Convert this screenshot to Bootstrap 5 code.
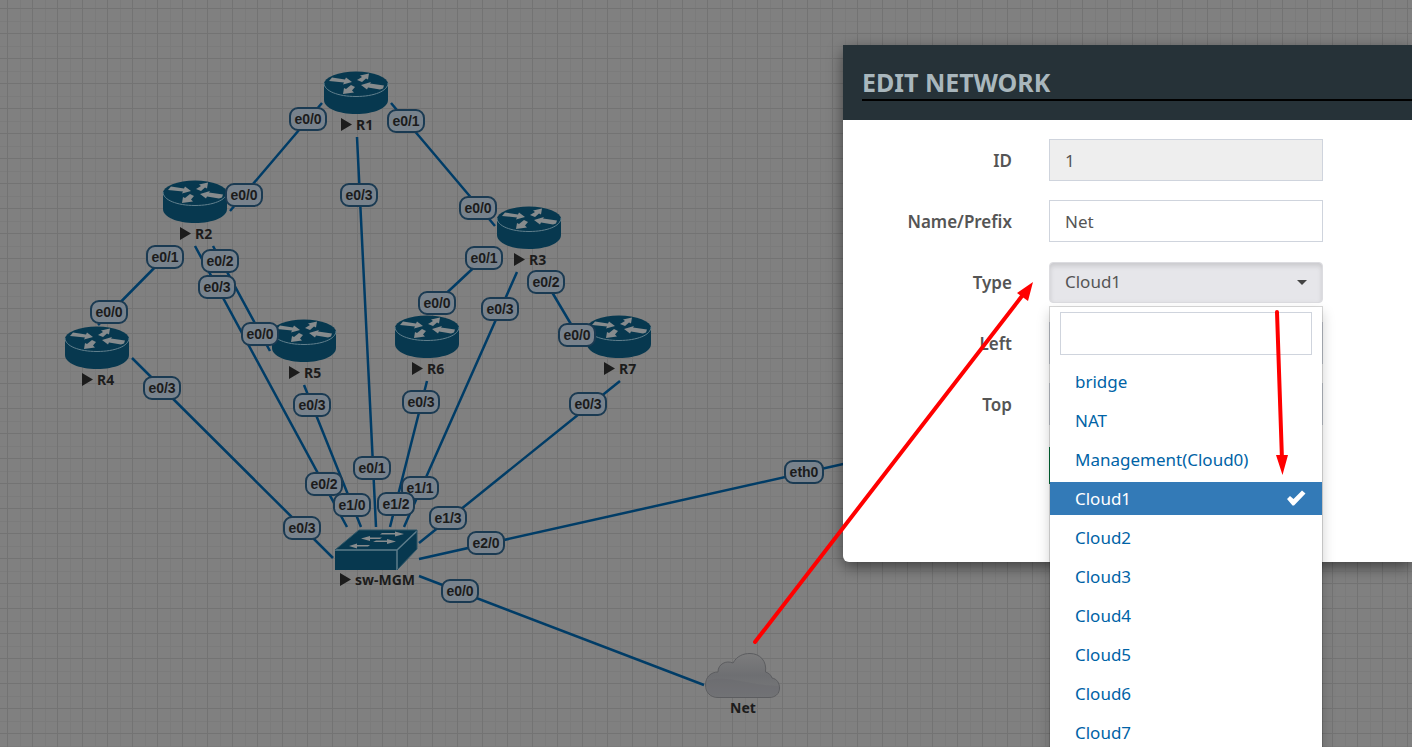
<!DOCTYPE html>
<html lang="en">
<head>
<meta charset="utf-8">
<meta name="viewport" content="width=device-width, initial-scale=1">
<title>Edit network</title>
<link href="https://cdn.jsdelivr.net/npm/bootstrap@5.3.0/dist/css/bootstrap.min.css" rel="stylesheet">
<style>
  body {
    font-family: "Noto Sans", "Open Sans", sans-serif;
    font-size: 17px;
    color: #555;
    background-color: #808080;
    background-image:
      linear-gradient(#737373 1px, transparent 1px),
      linear-gradient(90deg, #737373 1px, transparent 1px),
      linear-gradient(#7b7b7b 1px, transparent 1px),
      linear-gradient(90deg, #7b7b7b 1px, transparent 1px);
    background-size: 25px 25px;
    background-position: 0 8px, 7px 0, 0 21px, 20px 0;
  }
  .layer { position: absolute; inset: 0; width: 100%; height: 100%; }
  .wires { stroke: #003c66; stroke-width: 2.5; fill: none; }
  .port rect { fill: #78828c; stroke: #1a3a52; stroke-width: 2; }
  .port text { font: bold 14px "Liberation Sans", sans-serif; fill: #1c1c1c; text-anchor: middle; }
  .caption { font: bold 14px "Noto Sans", sans-serif; fill: #1c1c1c; }
  .marks { pointer-events: none; z-index: 2000; }
  .edit-panel {
    width: 40.3%;
    margin-top: 45px;
    border-radius: 6px 0 0 6px;
    box-shadow: 0 5px 15px rgba(0,0,0,.5);
    padding-bottom: 76px;
  }
  .edit-head { background: #263238; height: 75px; padding: 20px 0 0 19px; }
  .edit-head h1 {
    font-size: 25px; line-height: 34px; color: #a9b7bd;
    border-bottom: 2px solid #000; height: 36px;
  }
  .edit-form { padding-top: 19px; display: grid; row-gap: 19px; }
  .field-row { display: grid; grid-template-columns: 169px 48.2%; column-gap: 37px; height: 42px; align-items: center; }
  .field-row label { text-align: right; font-weight: 600; font-size: 17px; padding-top: 2px; }
  .edit-form .form-control {
    height: 42px; border-radius: 0; border-color: #cfd4dd; color: #555;
    padding: 0 15px; font-size: 17px;
  }
  .edit-form .form-control:disabled { background: #eee; }
  .type-btn {
    height: 41px; background: #e6e6ea; border: 1px solid #dcdce0; border-radius: 4px;
    box-shadow: inset 0 3px 5px rgba(0,0,0,.125); color: #555; font-size: 17px; padding: 0 15px;
  }
  .type-btn::after { border-top-width: 5px; border-left-width: 5px; border-right-width: 5px; color: #444; }
  .edit-form .type-menu {
    position: absolute; top: 44px; left: 0; right: 0; padding: 5px 0 3px; font-size: 17px;
    border-radius: 0; border: 1px solid rgba(0,0,0,.15);
    box-shadow: 0 6px 12px rgba(0,0,0,.175);
  }
  .type-menu .find { margin: 0 10px 10px; }
  .edit-form .find .form-control { height: 43px; }
  .type-menu .dropdown-item { color: #0063a6; height: 33px; line-height: 33px; padding: 0 16px 0 25px; margin-bottom: 6px; }
  .type-menu .dropdown-item.active { background: #337ab7; color: #fff; }
  .save-btn { width: 100px; height: 37px; border-radius: 0; background: #00733a; color: #fff; border: 0; }
</style>
</head>
<body class="vh-100 overflow-hidden position-relative">

<svg class="layer" role="img" aria-label="Network topology">
  <defs>
    <g id="router">
      <path d="M0 14V29C0 37 14 43 32 43S64 37 64 29V14Z" fill="#07384f"/>
      <ellipse cx="32" cy="13" rx="32" ry="12.500" fill="#07384f"/>
      <path d="M0 12C0 20 14 25.500 32 25.500S64 20 64 12" fill="none" stroke="#62808d" stroke-width="1"/>
      <path d="M5 10L8 6.500L21 8.500L22 6.500L28 11L19 13.500L20 11.500Z" fill="#868b8d"/>
      <path d="M59 17.500L60 14.500L46 12.500L47 11L37 14L43 18.500L44 16.500L56 18.500Z" fill="#868b8d"/>
      <path d="M33 9L38 6L36 4.500L45 2.500L44 8.500L42 7.500L38 11Z" fill="#868b8d"/>
      <path d="M31 16L27 14L22 18L20 17L19 23L30 21.500L28 19.500Z" fill="#868b8d"/>
    </g>
    <path id="play" d="M0 0L11 6.500L0 13Z" fill="#1c1c1c"/>
    <linearGradient id="cloudfill" x1="0" y1="0" x2="0" y2="1">
      <stop offset="0" stop-color="#7c7c7d"/><stop offset=".5" stop-color="#6e6f72"/><stop offset="1" stop-color="#78797b"/>
    </linearGradient>
  </defs>

  <g class="wires">
    <path d="M322 103L230 211M391 103L495 226M357 137L376 527M165 257L98 325M213 246L270 351M195 246L347 527M132 358L333 558M304 385L361 527M427 381L390 527M484 258L437 302M546 282L578 336M517 272L404 527M620 381L419 543M419 559L870 458M419 576L704 685"/>
  </g>

  <use href="#router" x="324" y="71"/><use href="#play" x="341" y="118"/><text class="caption" x="356" y="130">R1</text>
  <use href="#router" x="163" y="180"/><use href="#play" x="180" y="227"/><text class="caption" x="195" y="239">R2</text>
  <use href="#router" x="497" y="206"/><use href="#play" x="514" y="253"/><text class="caption" x="529" y="265">R3</text>
  <use href="#router" x="65" y="326"/><use href="#play" x="82" y="373"/><text class="caption" x="97" y="385">R4</text>
  <use href="#router" x="272" y="319"/><use href="#play" x="289" y="366"/><text class="caption" x="304" y="378">R5</text>
  <use href="#router" x="395" y="315"/><use href="#play" x="412" y="362"/><text class="caption" x="427" y="374">R6</text>
  <use href="#router" x="587" y="315"/><use href="#play" x="604" y="362"/><text class="caption" x="619" y="374">R7</text>

  <g>
    <path d="M335 550L359 530H417V549L397 570H335Z" fill="#07384f"/>
    <path d="M335 550H397L417 531M397 550V570" fill="none" stroke="#5d7c8a" stroke-width="1.500"/>
    <path d="M335 550L359 530H417V549L397 570" fill="none" stroke="#2c5466" stroke-width="1"/>
    <path d="M404 534L395 531.500V533H382L380 534.500H395V536.500ZM361 538.500L370 536V537.500H382L380 539H370V541ZM396 541.500L387 539V540.500H376L373 542H387V544ZM349 546L357 543.500V545H370L368 546.500H357V548.500Z" fill="#868b8d"/>
    <use href="#play" x="340" y="573"/><text class="caption" x="355" y="585">sw-MGM</text>
  </g>
  <g>
    <path d="M718 697.500C710 697.500 705.500 692 705.500 685C705.500 677 711 672 718 672C718 664 726 660 733 663C737 656 743 653.500 750 653.500C760 653.500 767 661 765.500 672C769 673 771 675 772 678C777 679 779.500 683 779.500 688C779.500 694 775 697.500 769 697.500Z" fill="url(#cloudfill)" stroke="#5c5d60"/>
    <path d="M706 681C728 674 748 686 779 686C780 693 775 697 769 697H718C710 697 705 691 706 681Z" fill="#66686c" opacity=".35"/>
    <text class="caption" x="730" y="713">Net</text>
  </g>

  <g class="port">
    <rect x="290" y="108" width="36" height="22" rx="8"/><text x="308" y="124">e0/0</text>
    <rect x="388" y="110" width="36" height="22" rx="8"/><text x="406" y="126">e0/1</text>
    <rect x="226" y="184" width="36" height="22" rx="8"/><text x="244" y="200">e0/0</text>
    <rect x="341" y="184" width="36" height="22" rx="8"/><text x="359" y="200">e0/3</text>
    <rect x="460" y="197" width="36" height="22" rx="8"/><text x="478" y="213">e0/0</text>
    <rect x="466" y="247" width="36" height="22" rx="8"/><text x="484" y="263">e0/1</text>
    <rect x="528" y="271" width="36" height="22" rx="8"/><text x="546" y="287">e0/2</text>
    <rect x="482" y="298" width="36" height="22" rx="8"/><text x="500" y="314">e0/3</text>
    <rect x="419" y="292" width="36" height="22" rx="8"/><text x="437" y="308">e0/0</text>
    <rect x="559" y="324" width="36" height="22" rx="8"/><text x="577" y="340">e0/0</text>
    <rect x="570" y="393" width="36" height="22" rx="8"/><text x="588" y="409">e0/3</text>
    <rect x="403" y="391" width="36" height="22" rx="8"/><text x="421" y="407">e0/3</text>
    <rect x="294" y="394" width="36" height="22" rx="8"/><text x="312" y="410">e0/3</text>
    <rect x="242" y="323" width="36" height="22" rx="8"/><text x="260" y="339">e0/0</text>
    <rect x="202" y="250" width="36" height="22" rx="8"/><text x="220" y="266">e0/2</text>
    <rect x="199" y="276" width="36" height="22" rx="8"/><text x="217" y="292">e0/3</text>
    <rect x="147" y="246" width="36" height="22" rx="8"/><text x="165" y="262">e0/1</text>
    <rect x="91" y="301" width="36" height="22" rx="8"/><text x="109" y="317">e0/0</text>
    <rect x="144" y="377" width="36" height="22" rx="8"/><text x="162" y="393">e0/3</text>
    <rect x="284" y="517" width="36" height="22" rx="8"/><text x="302" y="533">e0/3</text>
    <rect x="306" y="473" width="36" height="22" rx="8"/><text x="324" y="489">e0/2</text>
    <rect x="334" y="494" width="36" height="22" rx="8"/><text x="352" y="510">e1/0</text>
    <rect x="354" y="457" width="36" height="22" rx="8"/><text x="372" y="473">e0/1</text>
    <rect x="402" y="477" width="36" height="22" rx="8"/><text x="420" y="493">e1/1</text>
    <rect x="378" y="493" width="36" height="22" rx="8"/><text x="396" y="509">e1/2</text>
    <rect x="430" y="507" width="36" height="22" rx="8"/><text x="448" y="523">e1/3</text>
    <rect x="468" y="532" width="36" height="22" rx="8"/><text x="486" y="548">e2/0</text>
    <rect x="442" y="580" width="36" height="22" rx="8"/><text x="460" y="596">e0/0</text>
    <rect x="785" y="461" width="38" height="22" rx="8"/><text x="804" y="477">eth0</text>
  </g>
</svg>

<main class="d-flex justify-content-end align-items-start">
  <section class="edit-panel bg-white position-relative" role="dialog" aria-labelledby="panel-title">
    <header class="edit-head"><h1 id="panel-title" class="fw-bold text-uppercase m-0">Edit network</h1></header>
    <form class="edit-form">
      <div class="field-row"><label for="net-id">ID</label><input id="net-id" class="form-control" value="1" disabled></div>
      <div class="field-row"><label for="net-name">Name/Prefix</label><input id="net-name" class="form-control" value="Net"></div>
      <div class="field-row">
        <label for="net-type">Type</label>
        <div class="position-relative">
          <button id="net-type" type="button" class="type-btn dropdown-toggle w-100 d-flex align-items-center justify-content-between" aria-expanded="true">Cloud1</button>
          <div class="dropdown-menu type-menu show">
            <div class="find"><input class="form-control" type="text" aria-label="Find a type"></div>
            <a class="dropdown-item" href="#">bridge</a>
            <a class="dropdown-item" href="#">NAT</a>
            <a class="dropdown-item" href="#">Management(Cloud0)</a>
            <a class="dropdown-item active d-flex justify-content-between align-items-center" href="#">Cloud1
              <svg width="20" height="16" viewBox="0 0 20 16" aria-hidden="true"><path d="M1 9L4 6L7.500 9L16 0.500L19.500 3.500L8 15.500H6.500Z" fill="#fff"/></svg></a>
            <a class="dropdown-item" href="#">Cloud2</a>
            <a class="dropdown-item" href="#">Cloud3</a>
            <a class="dropdown-item" href="#">Cloud4</a>
            <a class="dropdown-item" href="#">Cloud5</a>
            <a class="dropdown-item" href="#">Cloud6</a>
            <a class="dropdown-item" href="#">Cloud7</a>
          </div>
        </div>
      </div>
      <div class="field-row"><label for="net-left">Left</label><input id="net-left" class="form-control"></div>
      <div class="field-row"><label for="net-top">Top</label><input id="net-top" class="form-control"></div>
      <div class="field-row"><span></span><button type="submit" class="save-btn" aria-label="Save"></button></div>
    </form>
  </section>
</main>

<svg class="layer marks" aria-hidden="true">
  <path d="M755 642L1022 296M1277 312L1282 460" stroke="#f00" stroke-width="4" stroke-linecap="round"/>
  <path d="M1033 282L1017 293L1028 301ZM1282.500 475L1276 455H1288Z" fill="#f00"/>
</svg>

<script src="https://cdn.jsdelivr.net/npm/bootstrap@5.3.0/dist/js/bootstrap.bundle.min.js"></script>
</body>
</html>
